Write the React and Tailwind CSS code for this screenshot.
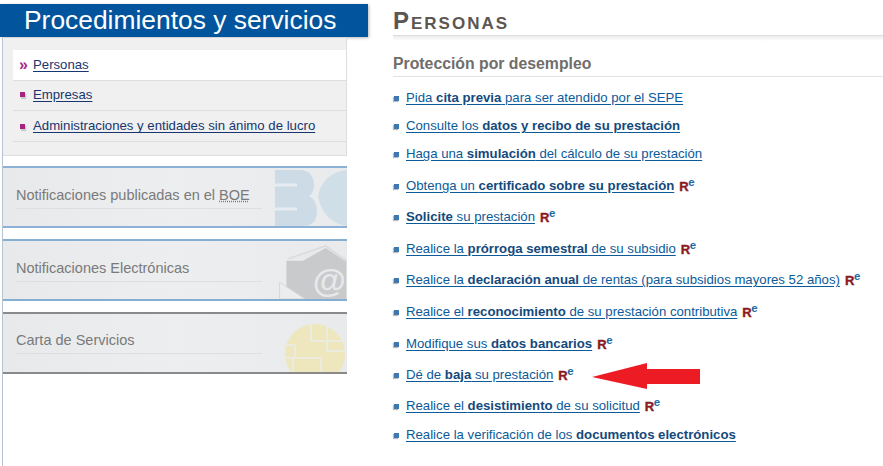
const F = "[font-family:'Liberation_Sans',Arial,sans-serif]";

const items = [
  { p: [["Pida ", 0], ["cita previa", 1], [" para ser atendido por el SEPE", 0]], h: "h-[28px]" },
  { p: [["Consulte los ", 0], ["datos y recibo de su prestación", 1]], h: "h-[28px]" },
  { p: [["Haga una ", 0], ["simulación", 1], [" del cálculo de su prestación", 0]], h: "h-[32px]" },
  { p: [["Obtenga un ", 0], ["certificado sobre su prestación", 1]], re: 1, h: "h-[31px]" },
  { p: [["Solicite", 1], [" su prestación", 0]], re: 1, h: "h-[32px]" },
  { p: [["Realice la ", 0], ["prórroga semestral", 1], [" de su subsidio", 0]], re: 1, h: "h-[31px]" },
  { p: [["Realice la ", 0], ["declaración anual", 1], [" de rentas (para subsidios mayores 52 años)", 0]], re: 1, h: "h-[32px]" },
  { p: [["Realice el ", 0], ["reconocimiento", 1], [" de su prestación contributiva", 0]], re: 1, h: "h-[32px]" },
  { p: [["Modifique sus ", 0], ["datos bancarios", 1]], re: 1, h: "h-[31px]" },
  { p: [["Dé de ", 0], ["baja", 1], [" su prestación", 0]], re: 1, h: "h-[31px]" },
  { p: [["Realice el ", 0], ["desistimiento", 1], [" de su solicitud", 0]], re: 1, h: "h-[29px]" },
  { p: [["Realice la verificación de los ", 0], ["documentos electrónicos", 1]], h: "h-[28px]" },
];

function Re() {
  return (
    <span className="ml-[5px] relative inline-block w-[17px] h-[16px] shrink-0">
      <span className="absolute left-0 top-[3px] text-[13px] leading-[12px] font-bold text-[#8b1a1f] [-webkit-text-stroke:0.4px_#8b1a1f]">R</span>
      <span className="absolute left-[9px] top-[-1px] text-[11.5px] leading-[11px] font-bold text-[#1d6aa5]">e</span>
    </span>
  );
}

function Deco({ kind }) {
  if (kind === "boe")
    return (
      <svg className="absolute right-0 top-0 h-full w-[72px]" viewBox="0 0 72 58">
        <path d="M0 2H26Q38 3 39 16Q39 25 34 28Q42 32 42 44Q41 58 28 58H0Z" fill="#cddbe6" />
        <path d="M0 17H22M0 41H22" stroke="#e6ecf1" strokeWidth="3" />
        <path d="M72 2Q48 5 43 28Q48 54 72 58Z" fill="#d0dee8" />
      </svg>
    );
  if (kind === "mail")
    return (
      <>
        <svg className="absolute right-0 top-0 h-full w-[68px]" viewBox="0 0 68 59">
          <path d="M9 18L47 5L68 20" fill="#e8e9ea" stroke="#d8dadb" strokeWidth="1.5" />
          <path d="M7 20H24L47 7L66 20H68V59H7Z" fill="#c9cacc" />
          <path d="M0 42L26 59H0Z" fill="#eceded" stroke="#d5d7d8" />
        </svg>
        <span className="absolute right-[1px] top-[20px] text-[34px] font-bold leading-[38px] text-[#e6e8ea]">@</span>
      </>
    );
  return (
    <svg className="absolute right-0 top-0 h-full w-[70px]" viewBox="0 0 70 58">
      <clipPath id="c"><path d="M0 0H70V58H0Z" /></clipPath>
      <g clipPath="url(#c)">
        <circle cx="38" cy="40" r="30" fill="#eee6bd" />
        <path d="M7 31H18V44H7M18 44H44V60M16 44V60M34 9V27H50V9M50 27V37H70M50 27H70" fill="none" stroke="#ebebe0" strokeWidth="2" />
      </g>
    </svg>
  );
}

function Card({ title, border, kind, boe, top }) {
  return (
    <div className={`relative h-[62px] w-[344px] overflow-hidden border-y-2 bg-gradient-to-r from-[#e8e9ea] via-[#eceeef] to-[#e8eaec] ${border}`}>
      <Deco kind={kind} />
      <div className={`relative ml-[13px] w-[246px] border-b border-b-[#dcdee0] pb-[3px] text-[14.5px] leading-[20px] text-[#7a7a7a] ${top}`}>
        {title}
        {boe && <span className="ml-1 underline decoration-dotted">BOE</span>}
      </div>
    </div>
  );
}

function Nav({ children, active, h, pad }) {
  return (
    <div className={`flex items-center border-b border-b-[#dedede] pl-[6px] ${pad} ${h} ${active ? "bg-white" : ""}`}>
      {active ? (
        <span className="w-[14px] text-[16px] font-bold leading-none text-[#a3288c]">»</span>
      ) : (
        <span className="ml-[1px] mr-[8px] h-[5px] w-[5px] bg-[#a8237f] shadow-[1px_2px_1px_#ccc]" />
      )}
      <a className="text-[13.2px] leading-none text-[#17366f] underline underline-offset-2">{children}</a>
    </div>
  );
}

export default function App() {
  return (
    <div className={`${F} relative flex h-[466px] w-[883px] overflow-hidden bg-white`}>
      <aside className="w-[393px] shrink-0">
        <div className="mt-[4px] flex h-[33px] w-[368px] items-center bg-[#02559c] pl-[24px] text-[26.4px] leading-none text-white shadow-[1px_1px_3px_#bbb]">
          Procedimientos y servicios
        </div>
        <div className="ml-[2px] h-[429px] border-l border-l-[#b4c4d4]">
          <div className="mt-[1px] h-[118px] w-[344px] border-r border-b border-r-[#dedede] border-b-[#dedede] bg-[#f0f0f0] pl-[10px] pt-[12px]">
            <Nav active h="h-[31px]" pad="pb-0">Personas</Nav>
            <Nav h="h-[30px]" pad="pb-[2px]">Empresas</Nav>
            <Nav h="h-[31px]" pad="pb-0">Administraciones y entidades sin ánimo de lucro</Nav>
          </div>
          <div className="mt-[10px] flex flex-col gap-[11px]">
            <Card title="Notificaciones publicadas en el" boe kind="boe" top="mt-[17px]" border="border-y-[#8db0d6]" />
            <Card title="Notificaciones Electrónicas" kind="mail" top="mt-[17px]" border="border-y-[#84aed2]" />
            <Card title="Carta de Servicios" kind="carta" top="mt-[16px]" border="border-y-[#8a8a8a]" />
          </div>
        </div>
      </aside>
      <main className="flex-1">
        <h1 className="mt-[9px] text-[24px] font-bold leading-[24px] text-[#5c5551] [font-variant:small-caps] tracking-[2px]">
          Personas
        </h1>
        <div className="mt-[2px] h-[6px] border-t border-t-[#dcdcdc] bg-gradient-to-b from-[#ececec] to-white" />
        <h2 className="mt-[13px] h-[23px] border-b border-b-[#e2e2e2] text-[15.8px] font-bold leading-[20px] text-[#716d6a]">
          Protección por desempleo
        </h2>
        <ul className="mt-[13px]">
          {items.map((it, i) => (
            <li key={i} className={`-ml-[1px] flex items-start ${it.h}`}>
              <span className="ml-[2px] mr-[7px] mt-[6px] h-[5px] w-[5px] shrink-0 bg-[#3e78ae] shadow-[-1px_1px_1px_#bbb]" />
              <a className="whitespace-nowrap text-[13.2px] leading-[15px] text-[#0b5a99] underline underline-offset-2">
                {it.p.map(([t, b], j) => (
                  <span key={j} className={b ? "font-bold text-[#14497c]" : ""}>{t}</span>
                ))}
              </a>
              {it.re && <Re />}
            </li>
          ))}
        </ul>
      </main>
      <svg className="absolute left-[591px] top-[362px]" width="111" height="28" viewBox="0 0 111 28">
        <path d="M1 15L56 1V7H109V22H56V27Z" fill="#ed1c24" />
      </svg>
    </div>
  );
}
